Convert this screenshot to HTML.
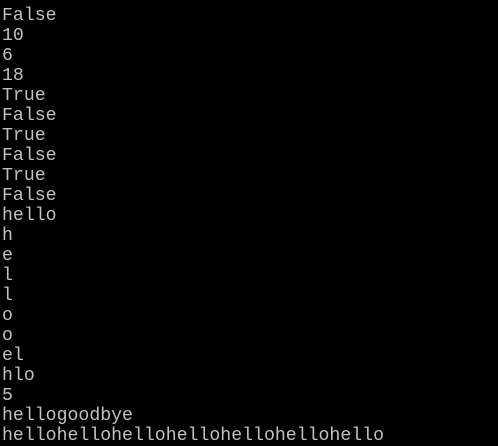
<!DOCTYPE html>
<html><head><style>
html,body{margin:0;padding:0;background:#000;width:498px;height:446px;overflow:hidden}
pre{margin:0;position:absolute;left:2px;top:6px;font-family:"Liberation Mono",monospace;font-size:18.2px;line-height:20px;color:#c0c0c0}
</style></head><body><pre>False
10
6
18
True
False
True
False
True
False
hello
h
e
l
l
o
o
el
hlo
5
hellogoodbye
hellohellohellohellohellohellohello</pre></body></html>
